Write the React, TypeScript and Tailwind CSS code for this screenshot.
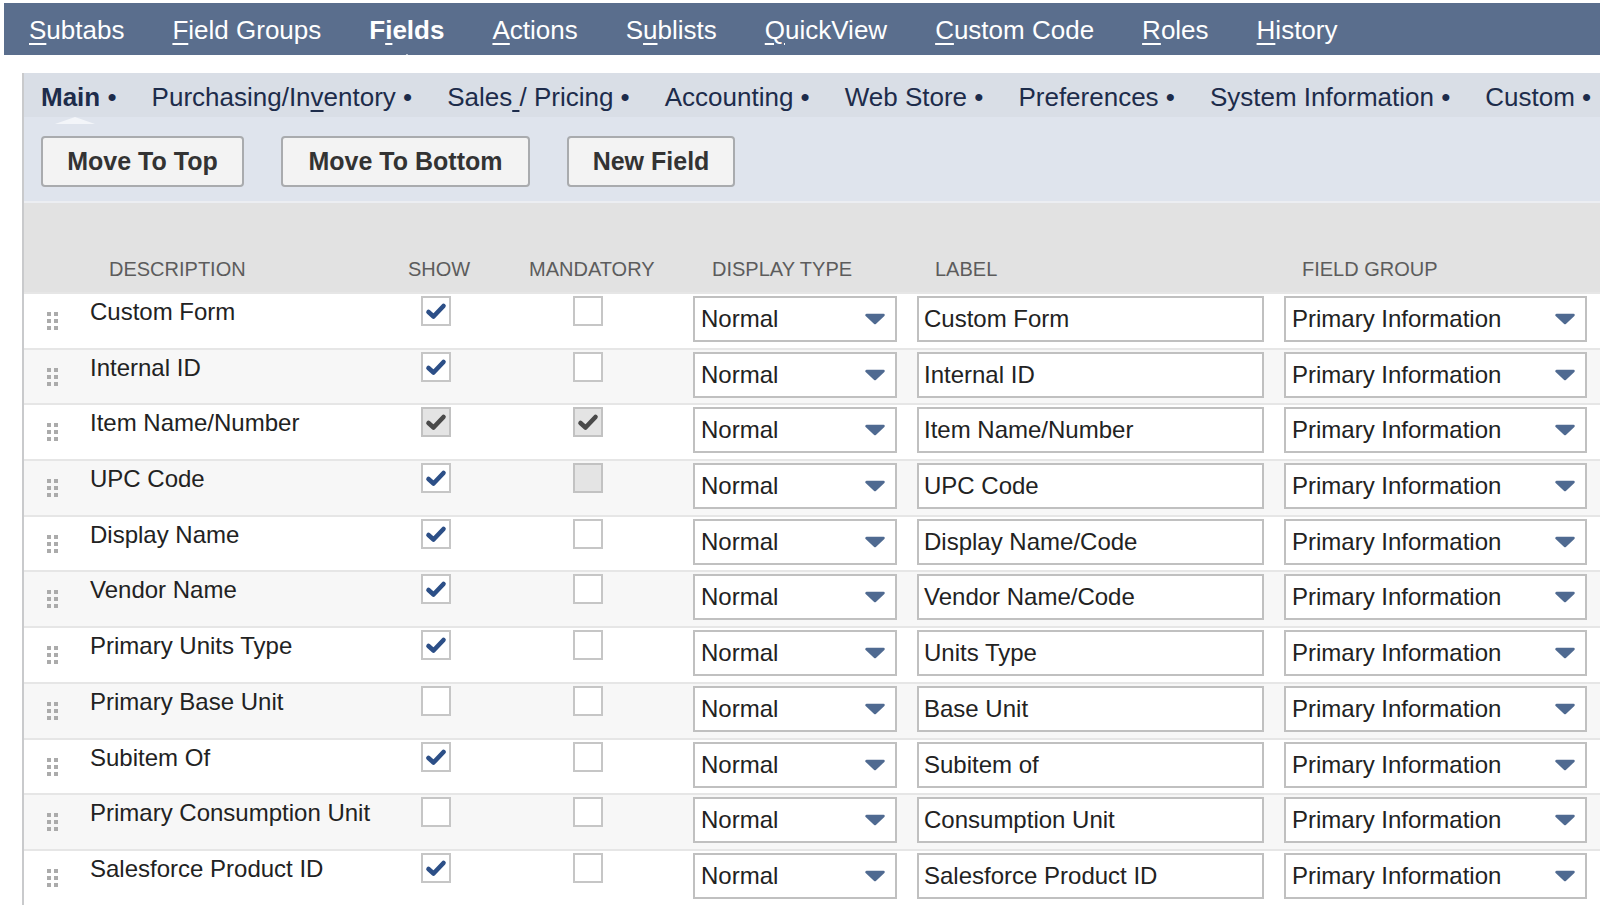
import React from 'react';

type Box = 'on' | 'off' | 'lockedOn' | 'lockedOff';
type Row = { desc: string; label: string; show: Box; mand: Box };

const rows: Row[] = [
  { desc: 'Custom Form', label: 'Custom Form', show: 'on', mand: 'off' },
  { desc: 'Internal ID', label: 'Internal ID', show: 'on', mand: 'off' },
  { desc: 'Item Name/Number', label: 'Item Name/Number', show: 'lockedOn', mand: 'lockedOn' },
  { desc: 'UPC Code', label: 'UPC Code', show: 'on', mand: 'lockedOff' },
  { desc: 'Display Name', label: 'Display Name/Code', show: 'on', mand: 'off' },
  { desc: 'Vendor Name', label: 'Vendor Name/Code', show: 'on', mand: 'off' },
  { desc: 'Primary Units Type', label: 'Units Type', show: 'on', mand: 'off' },
  { desc: 'Primary Base Unit', label: 'Base Unit', show: 'off', mand: 'off' },
  { desc: 'Subitem Of', label: 'Subitem of', show: 'on', mand: 'off' },
  { desc: 'Primary Consumption Unit', label: 'Consumption Unit', show: 'off', mand: 'off' },
  { desc: 'Salesforce Product ID', label: 'Salesforce Product ID', show: 'on', mand: 'off' },
];

// [text, index of the underlined access key, bold]
const topTabs: [string, number, boolean][] = [
  ['Subtabs', 0, false],
  ['Field Groups', 0, false],
  ['Fields', 1, true],
  ['Actions', 0, false],
  ['Sublists', 1, false],
  ['QuickView', 0, false],
  ['Custom Code', 0, false],
  ['Roles', 0, false],
  ['History', 0, false],
];

const subTabs: [string, number, boolean][] = [
  ['Main', -1, true],
  ['Purchasing/Inventory', 13, false],
  ['Sales / Pricing', 5, false],
  ['Accounting', -1, false],
  ['Web Store', -1, false],
  ['Preferences', -1, false],
  ['System Information', -1, false],
  ['Custom', -1, false],
];

function Keyed({ text, at }: { text: string; at: number }) {
  if (at < 0) return <>{text}</>;
  return (
    <>
      {text.slice(0, at)}
      <span className="underline decoration-[1.5px] underline-offset-[4px] whitespace-pre">{text[at]}</span>
      {text.slice(at + 1)}
    </>
  );
}

function Check({ state }: { state: Box }) {
  const locked = state === 'lockedOn' || state === 'lockedOff';
  const checked = state === 'on' || state === 'lockedOn';
  return (
    <div
      className={`w-[30px] h-[30px] border-2 flex items-center justify-center ${
        locked ? 'bg-[#e4e4e4] border-[#c2c2c2]' : 'bg-white border-[#c6c6c6]'
      }`}
    >
      {checked && (
        <svg width="22" height="18" viewBox="0 0 22 18">
          <path
            d="M3.5 10 L8.5 14.5 L18.5 4"
            fill="none"
            stroke={locked ? '#4a4a4a' : '#2c4f87'}
            strokeWidth="4.6"
            strokeLinecap="round"
            strokeLinejoin="round"
          />
        </svg>
      )}
    </div>
  );
}

function Arrow() {
  return (
    <svg width="22" height="12" viewBox="0 0 22 12">
      <path d="M2.5 2 H19.5 L11 10 Z" fill="#4f6a91" stroke="#4f6a91" strokeWidth="2.5" strokeLinejoin="round" />
    </svg>
  );
}

function Select({ value, width }: { value: string; width: string }) {
  return (
    <div className={`${width} h-[46px] border-2 border-[#c0c0c0] bg-white flex items-center justify-between pl-[6px] pr-[9px]`}>
      <span>{value}</span>
      <Arrow />
    </div>
  );
}

function Dots() {
  return (
    <div className="w-[11px] grid grid-cols-[4px_4px] gap-x-[3px] gap-y-[3px] mt-[18px]">
      {Array.from({ length: 6 }).map((_, i) => (
        <span key={i} className="w-[4px] h-[4px] bg-[#ababab]" />
      ))}
    </div>
  );
}

export default function App() {
  return (
    <div className="w-[1600px] h-[910px] overflow-hidden bg-white font-['Liberation_Sans',Arial,sans-serif] text-[#222]">
      {/* record tabs */}
      <div className="ml-[4px] mt-[3px] h-[52px] bg-[#5a6e8d] flex items-center pl-[25px] pt-[2px] gap-[48px] text-white text-[26px]">
        {topTabs.map(([t, k, b]) => (
          <div key={t} className={`relative ${b ? 'font-bold' : ''}`}>
            <Keyed text={t} at={k} />
            {b && (
              <span className="absolute left-1/2 -translate-x-1/2 bottom-[-13px] w-0 h-0 border-l-[11px] border-r-[11px] border-b-[9px] border-l-transparent border-r-transparent border-b-white" />
            )}
          </div>
        ))}
      </div>

      <div className="ml-[22px] mt-[18px] border-l-2 border-[#c9cacc]">
        {/* subtabs */}
        <div className="h-[44px] bg-[#d9dee6] flex items-center pl-[17px] pt-[4px] gap-[35px] text-[26px] text-[#1d2c4b] whitespace-nowrap">
          {subTabs.map(([t, k, b]) => (
            <div key={t} className="relative">
              <span className={b ? 'font-bold' : ''}>
                <Keyed text={t} at={k} />
              </span>{' '}
              •
              {b && (
                <span className="absolute left-[14px] bottom-[-7px] w-0 h-0 border-l-[20px] border-r-[20px] border-b-[7px] border-l-transparent border-r-transparent border-b-[#f3f5f9]" />
              )}
            </div>
          ))}
        </div>

        {/* buttons */}
        <div className="h-[84px] bg-[#dfe4ed] flex items-start pt-[19px] pl-[17px] gap-[37px]">
          {[
            ['Move To Top', 'w-[203px]'],
            ['Move To Bottom', 'w-[249px]'],
            ['New Field', 'w-[168px]'],
          ].map(([t, w]) => (
            <button
              key={t}
              className={`${w} h-[51px] rounded-[4px] border-2 border-[#a9abae] bg-[#f3f3f3] text-[25px] font-bold text-[#333]`}
            >
              {t}
            </button>
          ))}
        </div>
        <div className="h-[2px] bg-[#eceef2]" />

        {/* column headers */}
        <div className="h-[89px] bg-[#e2e2e2] flex items-end pb-[11px] text-[20px] leading-[24px] text-[#5c5c5c] whitespace-nowrap">
          <div className="w-[55px]" />
          <div className="w-[312px] pl-[30px]">DESCRIPTION</div>
          <div className="w-[90px] text-center pl-[6px]">SHOW</div>
          <div className="w-[152px] pl-[48px]">MANDATORY</div>
          <div className="w-[284px] pl-[79px]">DISPLAY TYPE</div>
          <div className="w-[367px] pl-[18px]">LABEL</div>
          <div className="pl-[18px]">FIELD GROUP</div>
        </div>

        {/* field rows */}
        {rows.map((r, i) => (
          <div
            key={r.desc}
            className={`h-[55.7px] border-t-2 border-[#e6e6e6] flex items-start text-[24px] ${
              i % 2 === 1 ? 'bg-[#f7f7f7]' : 'bg-white'
            }`}
          >
            <div className="w-[55px] pl-[23px]">
              <Dots />
            </div>
            <div className="w-[312px] pl-[11px] pt-[4px] leading-[28px]">{r.desc}</div>
            <div className="w-[90px] flex justify-center pt-[2px]">
              <Check state={r.show} />
            </div>
            <div className="w-[90px] ml-[62px] flex justify-center pt-[2px]">
              <Check state={r.mand} />
            </div>
            <div className="ml-[60px] pt-[2px]">
              <Select value="Normal" width="w-[204px]" />
            </div>
            <div className="ml-[20px] pt-[2px]">
              <div className="w-[347px] h-[46px] border-2 border-[#c0c0c0] bg-white flex items-center pl-[5px]">
                {r.label}
              </div>
            </div>
            <div className="ml-[20px] pt-[2px]">
              <Select value="Primary Information" width="w-[303px]" />
            </div>
          </div>
        ))}
      </div>
    </div>
  );
}
